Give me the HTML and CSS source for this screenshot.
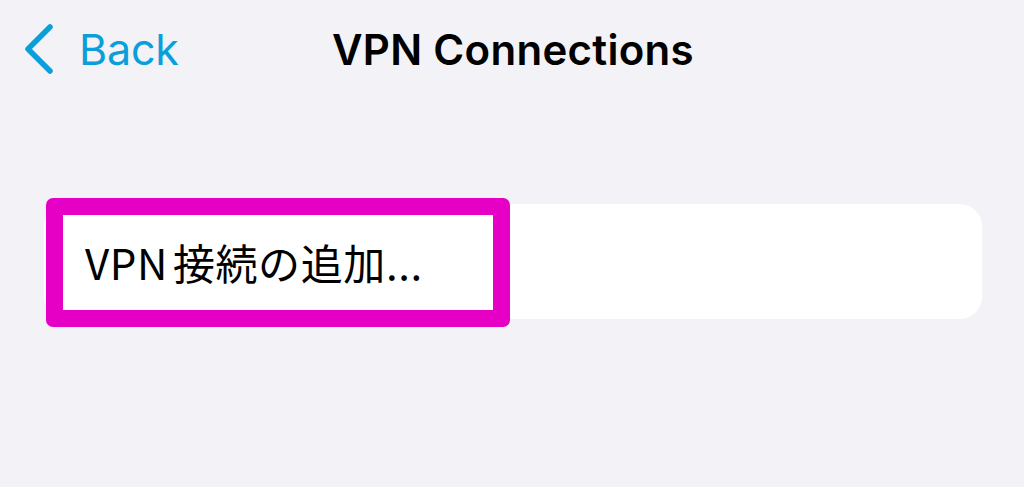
FILE: index.html
```html
<!DOCTYPE html>
<html lang="ja">
<head>
<meta charset="utf-8">
<title>VPN Connections</title>
<link rel="stylesheet" href="styles.css">
</head>
<body>
<header class="navbar">
  <a class="back" href="#">
    <svg class="chev" width="30" height="50" viewBox="0 0 30 50" aria-hidden="true">
      <path d="M26 3 L4 25 L26 47" fill="none" stroke="#0a9fdb" stroke-width="5.5" stroke-linecap="round" stroke-linejoin="round"/>
    </svg>
    <span class="back-label">Back</span>
  </a>
  <h1 class="title">VPN Connections</h1>
</header>
<main class="content">
  <div class="card">
    <div class="cell">VPN 接続の追加...</div>
    <div class="highlight"></div>
  </div>
</main>
</body>
</html>
```
FILE: styles.css
```css
html, body {
  margin: 0;
  padding: 0;
}
body {
  width: 1024px;
  height: 487px;
  background: #f2f2f7;
  font-family: Inter, "Noto Sans", "Noto Sans CJK JP", sans-serif;
  overflow: hidden;
}
.navbar {
  position: relative;
  height: 100px;
  display: flex;
  align-items: center;
}
.back {
  display: flex;
  align-items: center;
  gap: 25px;
  margin-left: 24px;
  margin-top: -2px;
  text-decoration: none;
  color: #0a9fdb;
}
.chev {
  display: block;
}
.back-label {
  font-size: 43px;
  font-weight: 400;
  letter-spacing: -0.2px;
}
.title {
  position: absolute;
  left: 0;
  right: 0;
  top: 0;
  height: 100px;
  margin: 0;
  display: flex;
  align-items: center;
  justify-content: center;
  font-size: 42px;
  font-weight: 600;
  letter-spacing: 0.3px;
  color: #000;
  pointer-events: none;
  margin-top: -1px;
  padding-left: 2px;
}
.content {
  padding: 104px 42px 0 44px;
}
.card {
  position: relative;
  background: #fff;
  border-radius: 22px;
  height: 115px;
  display: flex;
  align-items: center;
}
.cell {
  padding-left: 41px;
  padding-top: 0;
  font-family: "Noto Sans CJK JP", sans-serif;
  font-size: 42px;
  letter-spacing: 0.6px;
  word-spacing: -5px;
  color: #000;
}
.highlight {
  position: absolute;
  left: 2px;
  top: -6px;
  width: 430px;
  height: 95px;
  border: 17px solid #e600c5;
  border-radius: 7px;
}
```
